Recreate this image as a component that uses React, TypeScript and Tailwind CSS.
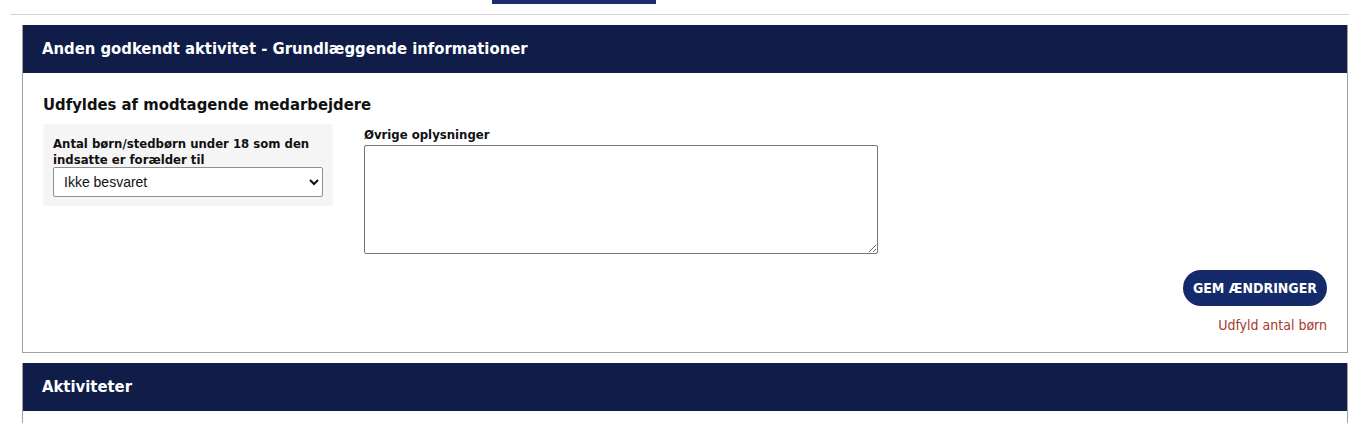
import React from 'react';

const font = "font-['DejaVu_Sans_Condensed','DejaVu_Sans',sans-serif]";

const SectionHeader: React.FC<{ title: string }> = ({ title }) => (
  <div className="bg-[#0f1d48] h-[48px] flex items-center px-[19px]">
    <h2 className="text-white text-[16.5px] font-bold leading-none">{title}</h2>
  </div>
);

const App: React.FC = () => {
  return (
    <div className={`${font} bg-white min-h-[423px] w-[1359px] overflow-hidden text-[#111]`}>
      {/* top nav strip */}
      <div className="ml-[10px] mr-[10px] h-[15px] border-b border-[#d4d4d4] flex">
        <div className="ml-[482px] w-[164px] h-[4px] bg-[#1b2d6b]" />
      </div>

      <div className="ml-[22px] mr-[11px] mt-[10px] flex flex-col gap-[10px]">
        <section className="border border-[#a0a0a0] border-t-0">
          <SectionHeader title="Anden godkendt aktivitet - Grundlæggende informationer" />
          <div className="px-[20px] pt-[21px] pb-[19px]">
            <h3 className="text-[16.5px] font-bold leading-[22px] text-[#111]">Udfyldes af modtagende medarbejdere</h3>
            <div className="flex gap-[31px] mt-[8px]">
              <div className="w-[290px] bg-[#f5f5f5] rounded-[3px] px-[10px] pt-[12px] pb-[9px] self-start">
                <label className="block text-[13px] font-bold leading-[16px] text-[#111]">
                  Antal børn/stedbørn under 18 som den indsatte er forælder til
                </label>
                <select className="mt-[-1px] w-[270px] h-[30px] border border-[#8f8f8f] rounded-[2px] bg-white text-[14px] px-[6px] font-['Liberation_Sans',sans-serif] text-[#111]">
                  <option>Ikke besvaret</option>
                </select>
              </div>
              <div className="pt-[3px]">
                <label className="block text-[13px] font-bold leading-[16px] text-[#111]">Øvrige oplysninger</label>
                <textarea className="mt-[2px] block w-[514px] h-[109px] border border-[#767676] rounded-[2px] resize-y bg-white" />
              </div>
            </div>
            <div className="flex flex-col items-end mt-[16px]">
              <button className="bg-[#152a6b] text-white text-[14px] font-bold h-[36px] px-[10px] rounded-full leading-none">
                GEM ÆNDRINGER
              </button>
              <p className="mt-[11px] text-[14px] text-[#a5372e] leading-[16px]">Udfyld antal børn</p>
            </div>
          </div>
        </section>

        <section className="border border-[#a0a0a0] border-t-0 h-[80px]">
          <SectionHeader title="Aktiviteter" />
        </section>
      </div>
    </div>
  );
};

export default App;
